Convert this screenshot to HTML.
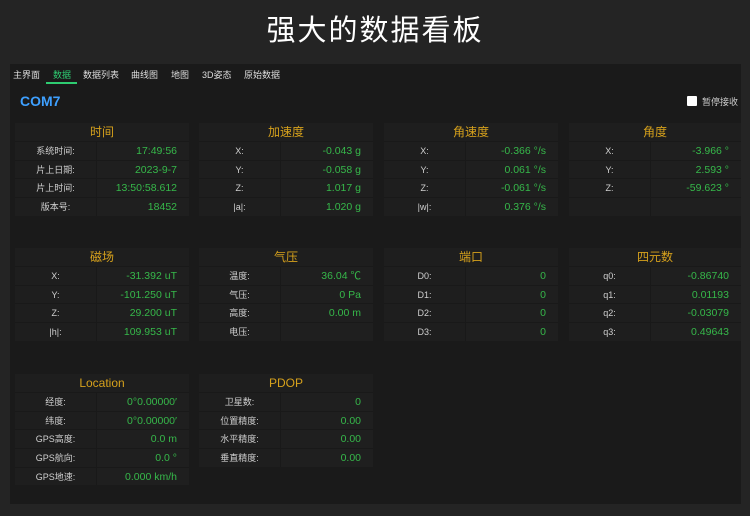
<!DOCTYPE html><html><head><meta charset="utf-8"><style>
*{margin:0;padding:0;box-sizing:border-box}
body{width:750px;height:516px;background:#242424;font-family:"Liberation Sans","Noto Sans CJK SC",sans-serif;position:relative;overflow:hidden}
.title{position:absolute;top:7px;left:0;width:750px;text-align:center;color:#fff;font-size:29px;letter-spacing:2px}
.panel{position:absolute;left:10px;top:64px;width:731px;height:440px;background:#1a1a1a}
.tabs{position:absolute;left:13px;top:68px;font-size:9px;color:#ddd}
.tabs span{position:absolute;white-space:nowrap}
.ul{position:absolute;left:46px;top:82px;width:31px;height:2px;background:#2ecc71}
.com{position:absolute;left:20px;top:93px;color:#3ea0ff;font-size:14px;font-weight:bold}
.chk{position:absolute;left:687px;top:96px;width:10px;height:10px;background:#fff;border-radius:1px}
.chkt{position:absolute;left:702px;top:95px;color:#ccc;font-size:9px}
.card{position:absolute;width:174px;background:#1d1d1d}
.card h3{height:18px;line-height:18px;text-align:center;color:#d6a11c;font-size:12px;font-weight:normal;background:#1e1e1e}
.row{height:18.7px;display:flex;border-top:1px solid #191919}
.row .l{width:82px;text-align:center;color:#d0d0d0;font-size:9px;line-height:18px;border-right:1px solid #191919;background:#1e1e1e}
.row .v{flex:1;text-align:right;padding-right:12px;color:#36b84a;font-size:10.5px;line-height:18px;background:#1f1f1f}
</style></head><body>
<div class="title">强大的数据看板</div>
<div class="panel"></div>
<div class="tabs"><span style="left:0">主界面</span><span style="left:40px;color:#2ecc71">数据</span><span style="left:70px">数据列表</span><span style="left:118px">曲线图</span><span style="left:158px">地图</span><span style="left:189px">3D姿态</span><span style="left:231px">原始数据</span></div>
<div class="ul"></div>
<div class="com">COM7</div>
<div class="chk"></div><div class="chkt">暂停接收</div>

<div class="card" style="left:15px;top:123px"><h3>时间</h3>
<div class="row"><div class="l">系统时间:</div><div class="v">17:49:56</div></div>
<div class="row"><div class="l">片上日期:</div><div class="v">2023-9-7</div></div>
<div class="row"><div class="l">片上时间:</div><div class="v">13:50:58.612</div></div>
<div class="row"><div class="l">版本号:</div><div class="v">18452</div></div></div>
<div class="card" style="left:199px;top:123px"><h3>加速度</h3>
<div class="row"><div class="l">X:</div><div class="v">-0.043 g</div></div>
<div class="row"><div class="l">Y:</div><div class="v">-0.058 g</div></div>
<div class="row"><div class="l">Z:</div><div class="v">1.017 g</div></div>
<div class="row"><div class="l">|a|:</div><div class="v">1.020 g</div></div></div>
<div class="card" style="left:384px;top:123px"><h3>角速度</h3>
<div class="row"><div class="l">X:</div><div class="v">-0.366 °/s</div></div>
<div class="row"><div class="l">Y:</div><div class="v">0.061 °/s</div></div>
<div class="row"><div class="l">Z:</div><div class="v">-0.061 °/s</div></div>
<div class="row"><div class="l">|w|:</div><div class="v">0.376 °/s</div></div></div>
<div class="card" style="left:569px;top:123px;width:172px"><h3>角度</h3>
<div class="row"><div class="l">X:</div><div class="v">-3.966 °</div></div>
<div class="row"><div class="l">Y:</div><div class="v">2.593 °</div></div>
<div class="row"><div class="l">Z:</div><div class="v">-59.623 °</div></div>
<div class="row"><div class="l"></div><div class="v"></div></div></div>

<div class="card" style="left:15px;top:248px"><h3>磁场</h3>
<div class="row"><div class="l">X:</div><div class="v">-31.392 uT</div></div>
<div class="row"><div class="l">Y:</div><div class="v">-101.250 uT</div></div>
<div class="row"><div class="l">Z:</div><div class="v">29.200 uT</div></div>
<div class="row"><div class="l">|h|:</div><div class="v">109.953 uT</div></div></div>
<div class="card" style="left:199px;top:248px"><h3>气压</h3>
<div class="row"><div class="l">温度:</div><div class="v">36.04 ℃</div></div>
<div class="row"><div class="l">气压:</div><div class="v">0 Pa</div></div>
<div class="row"><div class="l">高度:</div><div class="v">0.00 m</div></div>
<div class="row"><div class="l">电压:</div><div class="v"></div></div></div>
<div class="card" style="left:384px;top:248px"><h3>端口</h3>
<div class="row"><div class="l">D0:</div><div class="v">0</div></div>
<div class="row"><div class="l">D1:</div><div class="v">0</div></div>
<div class="row"><div class="l">D2:</div><div class="v">0</div></div>
<div class="row"><div class="l">D3:</div><div class="v">0</div></div></div>
<div class="card" style="left:569px;top:248px;width:172px"><h3>四元数</h3>
<div class="row"><div class="l">q0:</div><div class="v">-0.86740</div></div>
<div class="row"><div class="l">q1:</div><div class="v">0.01193</div></div>
<div class="row"><div class="l">q2:</div><div class="v">-0.03079</div></div>
<div class="row"><div class="l">q3:</div><div class="v">0.49643</div></div></div>

<div class="card" style="left:15px;top:374px"><h3>Location</h3>
<div class="row"><div class="l">经度:</div><div class="v">0°0.00000′</div></div>
<div class="row"><div class="l">纬度:</div><div class="v">0°0.00000′</div></div>
<div class="row"><div class="l">GPS高度:</div><div class="v">0.0 m</div></div>
<div class="row"><div class="l">GPS航向:</div><div class="v">0.0 °</div></div>
<div class="row"><div class="l">GPS地速:</div><div class="v">0.000 km/h</div></div></div>
<div class="card" style="left:199px;top:374px"><h3>PDOP</h3>
<div class="row"><div class="l">卫星数:</div><div class="v">0</div></div>
<div class="row"><div class="l">位置精度:</div><div class="v">0.00</div></div>
<div class="row"><div class="l">水平精度:</div><div class="v">0.00</div></div>
<div class="row"><div class="l">垂直精度:</div><div class="v">0.00</div></div></div>
</body></html>
